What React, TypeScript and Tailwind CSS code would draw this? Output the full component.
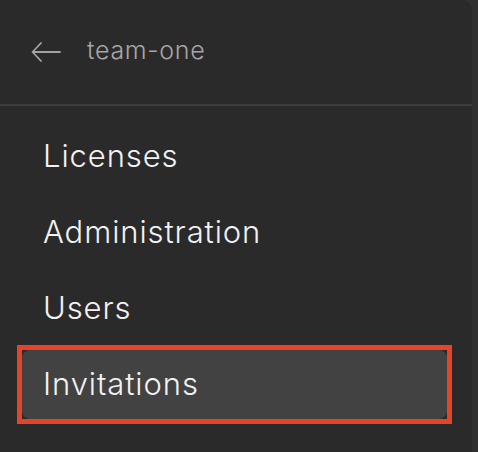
import React from 'react';

const items = ['Licenses', 'Administration', 'Users', 'Invitations'];

const App = () => {
  const active = 'Invitations';

  return (
    <div className="w-[478px] h-[452px] bg-[#303030] overflow-hidden" style={{ fontFamily: 'Inter, "Noto Sans", sans-serif' }}>
      <div className="w-[472px] h-full bg-[#2a2a2a] rounded-tr-[10px] flex flex-col">
        {/* Header */}
        <div className="h-[104px] flex items-center pl-[31px] gap-[26px] shrink-0">
          <svg width="30" height="20" viewBox="0 0 30 20" fill="none" stroke="#a3a3a3" strokeWidth="1.8" strokeLinecap="round" strokeLinejoin="round">
            <path d="M29 10H2" />
            <path d="M10 1L1.5 10L10 19" />
          </svg>
          <span className="text-[25px] font-light tracking-[0.7px] text-[#a6a6a6] leading-none pb-[3px]">team-one</span>
        </div>
        <div className="h-[2px] bg-[#3c3c3c] shrink-0" />

        {/* Menu */}
        <div className="flex flex-col gap-[7px] pt-[16px] pl-[22px] pr-[25px]">
          {items.map((item) =>
            item === active ? (
              <div key={item} className="-mx-[5px] -my-[5px] border-[5px] border-[#e5432a]">
                <div className="h-[69px] rounded-lg bg-[#424242] flex items-center pl-[21px] text-[31px] font-light tracking-[0.9px] text-[#f2f2f2]">
                  {item}
                </div>
              </div>
            ) : (
              <div key={item} className="h-[69px] rounded-lg flex items-center pl-[21px] text-[31px] font-light tracking-[0.9px] text-[#f2f2f2]">
                {item}
              </div>
            )
          )}
        </div>
      </div>
    </div>
  );
};

export default App;
